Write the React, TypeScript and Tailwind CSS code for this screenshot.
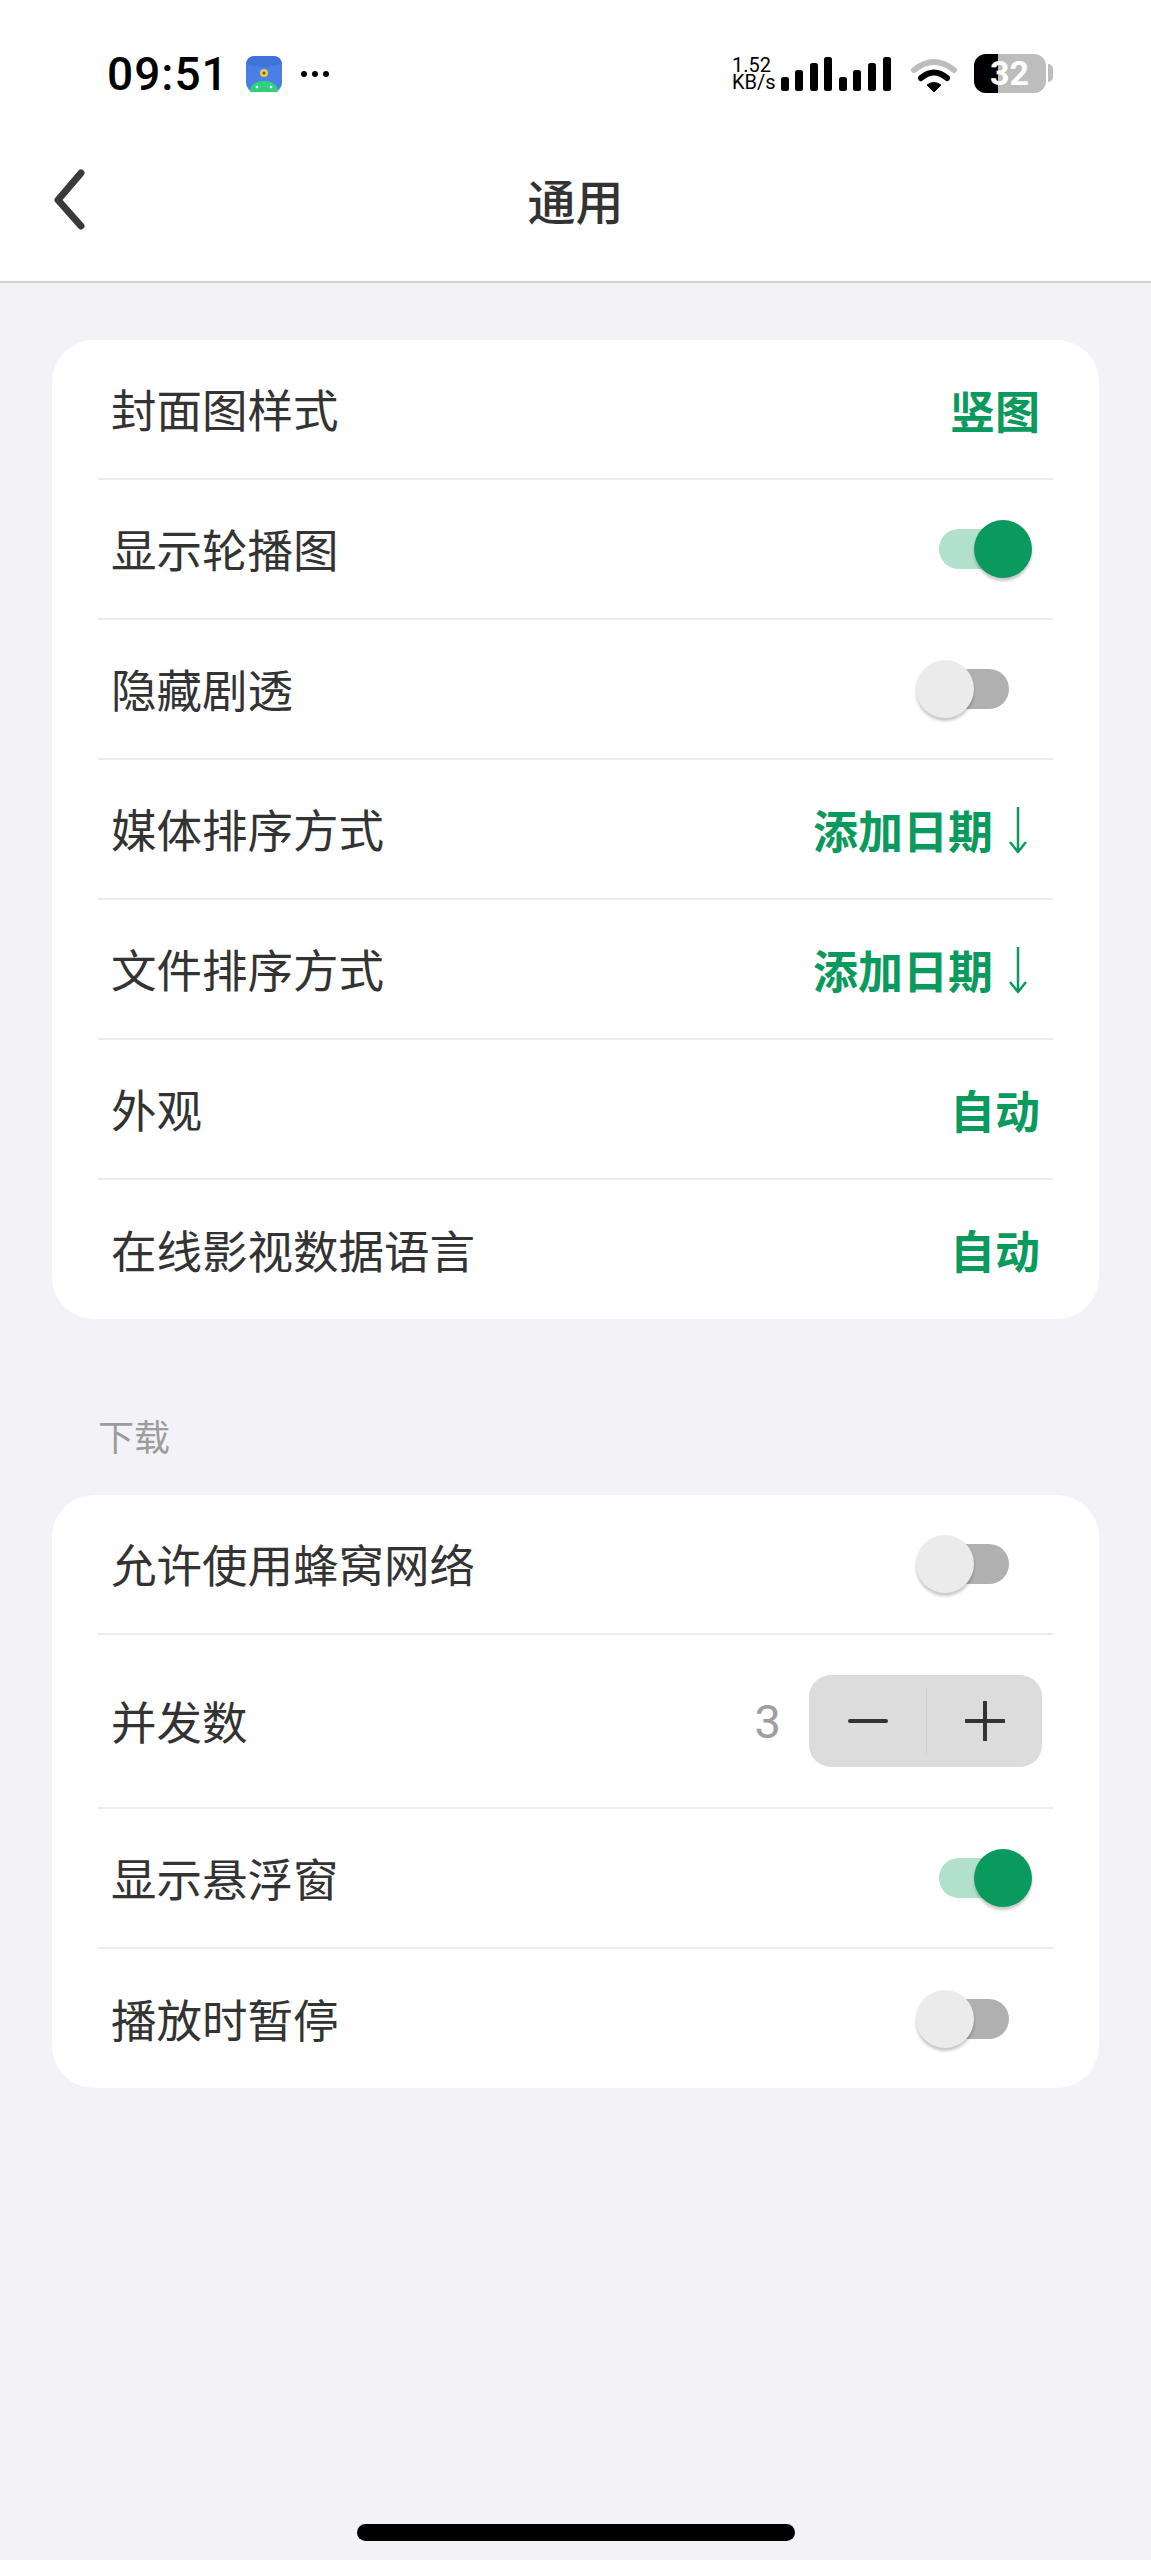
import type { ReactNode } from "react";

const cjk = `font-['Noto_Sans_CJK_SC',sans-serif]`;

function StatusBar() {
  const bars = [
    [780, 77],
    [794, 70],
    [809, 63],
    [823, 57],
    [838, 77],
    [852, 70],
    [867, 63],
    [882, 57],
  ];
  return (
    <div className="h-[112px] flex items-start justify-between pl-[107px] pr-[98px] pt-[54px] bg-white">
      <div className="flex items-center h-[39px]">
        <span className="font-['Roboto',sans-serif] font-medium text-[46px] leading-none text-black tracking-[1px]">09:51</span>
        <svg width="36" height="36" viewBox="0 0 36 36" className="ml-[17px]">
          <rect width="36" height="36" rx="9" fill="#4a80e4" />
          <path d="M0 8 Q18 14 36 8 V9 Q36 0 27 0 H9 Q0 0 0 9Z" fill="#3f73d9" />
          <circle cx="18" cy="17" r="4" fill="#f0c648" />
          <circle cx="18" cy="17" r="1.5" fill="#6b5a2a" />
          <path d="M4 36 C4 21 32 21 32 36Z" fill="#2fd27a" />
          <circle cx="11" cy="31" r="1.3" fill="#fff" />
          <circle cx="25" cy="31" r="1.3" fill="#fff" />
        </svg>
        <div className="flex gap-[5px] ml-[19px]">
          <div className="w-[6px] h-[6px] rounded-full bg-black" />
          <div className="w-[6px] h-[6px] rounded-full bg-black" />
          <div className="w-[6px] h-[6px] rounded-full bg-black" />
        </div>
      </div>
      <div className="flex items-start">
        <div className="font-['Roboto',sans-serif] text-[20px] leading-[17px] text-black mt-[3px] w-[49px] whitespace-nowrap">
          <div>1.52</div>
          <div>KB/s</div>
        </div>
        <svg width="112" height="39" viewBox="780 54 112 39">
          {bars.map(([x, y]) => (
            <rect key={x} x={x} y={y} width="8" height={91 - y} rx="2.5" fill="#000" />
          ))}
        </svg>
        <svg width="46" height="36" viewBox="0 0 46 36" className="ml-[18px] mt-[3px]">
          <path d="M3 13 Q23 -3 43 13" fill="none" stroke="#bdbdbd" strokeWidth="6" strokeLinecap="round" />
          <path d="M10 21 Q23 10 36 21" fill="none" stroke="#000" strokeWidth="6" strokeLinecap="round" />
          <path d="M16 28 Q23 23 30 28 L23 35Z" fill="#000" stroke="#000" strokeWidth="1" strokeLinejoin="round" />
        </svg>
        <div className="relative ml-[17px] w-[72px] h-[39px] rounded-[12px] bg-[#bdbdbd] overflow-hidden">
          <div className="absolute left-0 top-0 h-full w-[24px] bg-black" />
          <span className="absolute left-[16px] top-0 font-['Roboto',sans-serif] font-bold text-[34px] leading-[39px] text-white">32</span>
        </div>
        <div className="w-[5px] h-[18px] mt-[10px] ml-[2px] rounded-r-full bg-[#bdbdbd]" />
      </div>
    </div>
  );
}

function Header() {
  return (
    <div className="relative h-[171px] flex items-start justify-center border-b-2 border-[#d2d2d4] bg-white">
      <svg width="40" height="66" viewBox="0 0 40 66" className="absolute left-[49px] top-[55px]">
        <path d="M32 6 L9 33 L32 59" fill="none" stroke="#3a3a3a" strokeWidth="7" strokeLinecap="round" strokeLinejoin="round" />
      </svg>
      <span className={`${cjk} text-[48px] leading-[68px] mt-[53px] font-medium text-[#333333]`}>通用</span>
    </div>
  );
}

function Toggle({ on }: { on: boolean }) {
  if (on) {
    return (
      <div className="relative w-[90px] h-[40px] rounded-full bg-[#b1e0cc] mr-[24px]">
        <div className="absolute right-[-3px] top-[-9px] w-[58px] h-[58px] rounded-full bg-[#0b9a5e] shadow-[0_3px_3px_rgba(0,0,0,0.22)]" />
      </div>
    );
  }
  return (
    <div className="relative w-[90px] h-[40px] rounded-full bg-[#b0b0b0] mr-[44px]">
      <div className="absolute left-[-3px] top-[-9px] w-[58px] h-[58px] rounded-full bg-[#ebebeb] shadow-[0_3px_3px_rgba(0,0,0,0.22)]" />
    </div>
  );
}

function Value({ text, arrow }: { text: string; arrow?: boolean }) {
  return (
    <div className={`flex items-center ${arrow ? "mr-[24px]" : "mr-[13px]"}`}>
      <span className={`${cjk} text-[45px] leading-none font-semibold text-[#0b9a5e]`}>{text}</span>
      {arrow && (
        <svg width="22" height="50" viewBox="0 0 22 50" className="ml-[14px]">
          <path d="M11 3 V48 M3 38 L11 48 L19 38" fill="none" stroke="#0b9a5e" strokeWidth="2.5" strokeLinejoin="round" />
        </svg>
      )}
    </div>
  );
}

function Stepper() {
  return (
    <div className="flex items-center mr-[11px]">
      <span className="font-['Roboto',sans-serif] text-[47px] leading-none text-[#9e9e9e] mr-[28px]">3</span>
      <div className="flex items-center w-[233px] h-[92px] rounded-[22px] bg-[#dcdcdc]">
        <div className="w-[117px] flex justify-center">
          <div className="w-[40px] h-[4px] rounded-full bg-[#333333]" />
        </div>
        <div className="w-px h-[68px] bg-[#d2d2d2]" />
        <div className="flex-1 flex justify-center">
          <svg width="40" height="40" viewBox="0 0 40 40">
            <path d="M1 20 H39 M20 1 V39" stroke="#333333" strokeWidth="4" strokeLinecap="round" />
          </svg>
        </div>
      </div>
    </div>
  );
}

function Row({ label, tall, last, children }: { label: string; tall?: boolean; last?: boolean; children: ReactNode }) {
  const height = tall ? "h-[174px]" : last ? "h-[139px]" : "h-[140px]";
  return (
    <div className={`${height} flex items-center justify-between pl-[13px] ${last ? "" : "border-b-2 border-[#ececec]"}`}>
      <span className={`${cjk} text-[45.5px] leading-none text-[#333333]`}>{label}</span>
      {children}
    </div>
  );
}

function Card({ children }: { children: ReactNode }) {
  return <div className="rounded-[42px] bg-white px-[46px]">{children}</div>;
}

export default function App() {
  return (
    <div className="w-[1151px] h-[2560px] relative bg-[#f2f2f7] overflow-hidden">
      <StatusBar />
      <Header />
      <div className="px-[52px] pt-[57px]">
        <Card>
          <Row label="封面图样式"><Value text="竖图" /></Row>
          <Row label="显示轮播图"><Toggle on /></Row>
          <Row label="隐藏剧透"><Toggle on={false} /></Row>
          <Row label="媒体排序方式"><Value text="添加日期" arrow /></Row>
          <Row label="文件排序方式"><Value text="添加日期" arrow /></Row>
          <Row label="外观"><Value text="自动" /></Row>
          <Row label="在线影视数据语言" last><Value text="自动" /></Row>
        </Card>
        <div className={`${cjk} text-[36px] leading-[52px] text-[#9c9c9c] pl-[46px] mt-[90px] mb-[34px]`}>下载</div>
        <Card>
          <Row label="允许使用蜂窝网络"><Toggle on={false} /></Row>
          <Row label="并发数" tall><Stepper /></Row>
          <Row label="显示悬浮窗"><Toggle on /></Row>
          <Row label="播放时暂停" last><Toggle on={false} /></Row>
        </Card>
      </div>
      <div className="absolute left-[357px] top-[2524px] w-[438px] h-[17px] rounded-full bg-black" />
    </div>
  );
}
